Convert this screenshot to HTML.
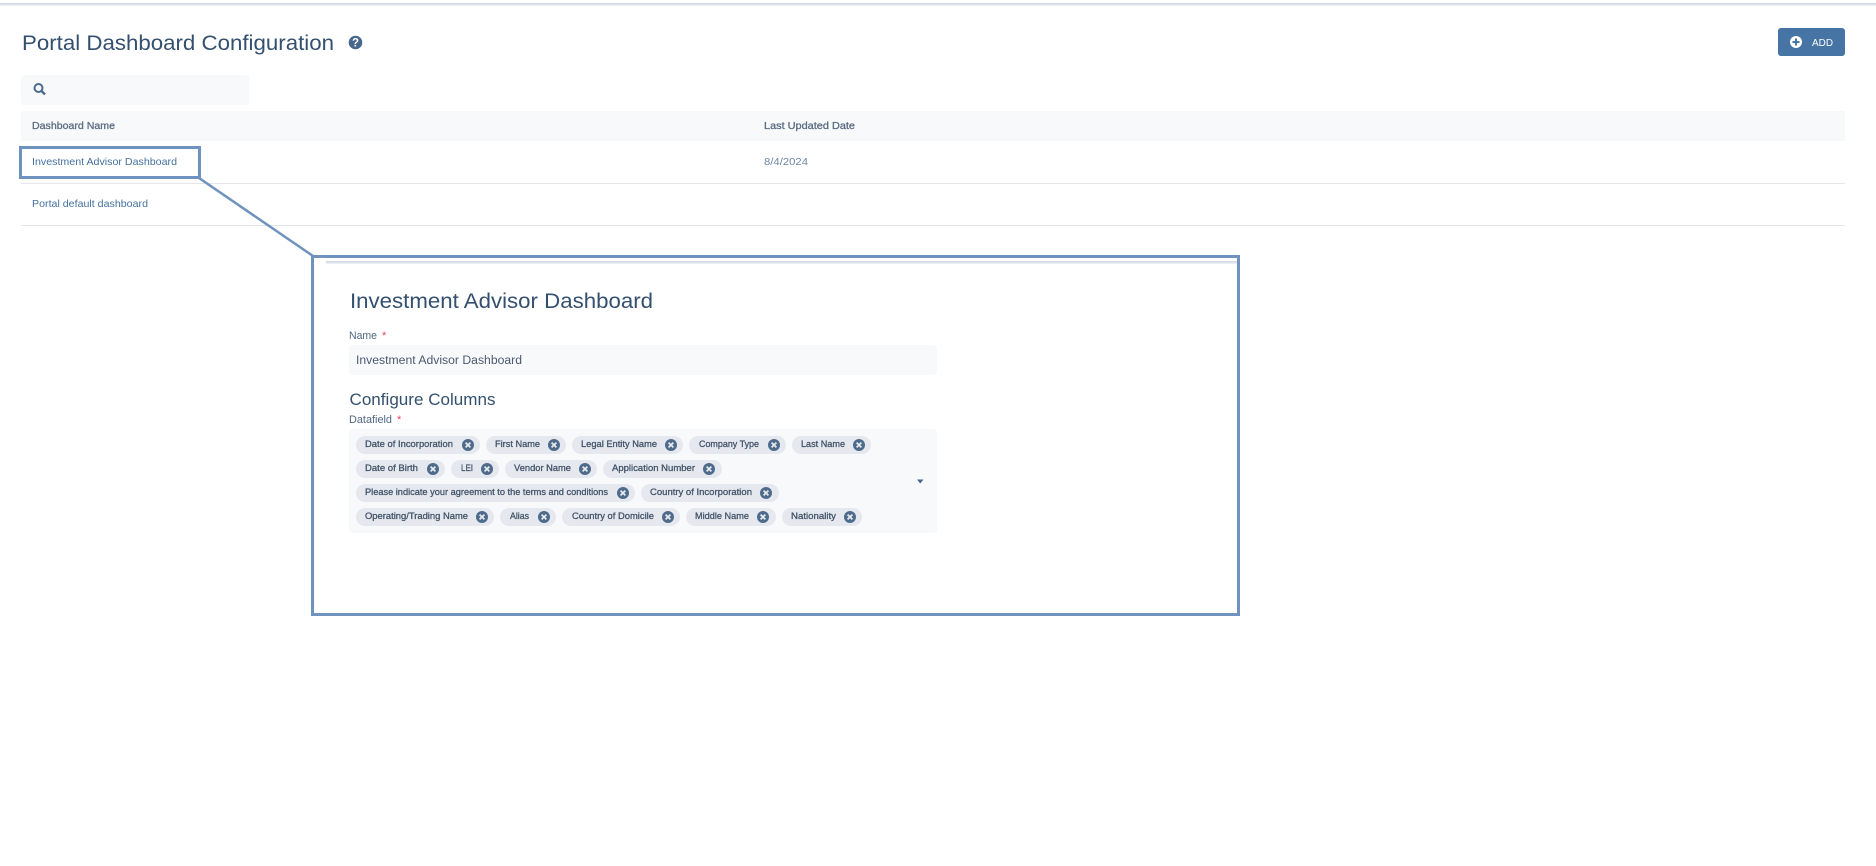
<!DOCTYPE html>
<html lang="en">
<head>
<meta charset="utf-8">
<title>Portal Dashboard Configuration</title>
<style>
html,body{margin:0;padding:0;background:#fff;width:1876px;height:866px;overflow:hidden}
svg{display:block}
text{font-family:"Liberation Sans",sans-serif}
.h{fill:#34506f}
.lab{font-size:11px;fill:#4f6784}
.th{font-size:10.5px;fill:#5a6b80;stroke:#5a6b80;stroke-width:.3px}
.lnk{font-size:10.5px;fill:#44709f}
.ct{font-size:9.5px;fill:#44546a;stroke:#44546a;stroke-width:.3px}
.chip{fill:#e5e8ee}
.box{fill:#f8f9fb}
</style>
</head>
<body>
<svg width="1876" height="866" viewBox="0 0 1876 866" xmlns="http://www.w3.org/2000/svg">
<defs>
<linearGradient id="bar" x1="0" y1="0" x2="0" y2="1"><stop offset="0" stop-color="#c9d4e0"/><stop offset="1" stop-color="#f1f4f8"/></linearGradient>
<g id="x"><circle r="6" fill="#4f6b8c"/><path d="M-2.400-2.400 2.400 2.400M2.400-2.400-2.400 2.400" stroke="#e8ebf0" stroke-width="1.700" fill="none"/></g>
</defs>
<rect width="1876" height="866" fill="#fff"/>
<rect x="0" y="3" width="1876" height="3" fill="url(#bar)"/>

<text class="h" x="22" y="50" font-size="21" textLength="312" lengthAdjust="spacingAndGlyphs">Portal Dashboard Configuration</text>
<circle cx="355.500" cy="42.500" r="6.800" fill="#47678c"/>
<text x="355.500" y="46.700" font-size="11.500" font-weight="700" fill="#fff" text-anchor="middle">?</text>

<rect x="1778" y="28" width="67" height="28" rx="3" fill="#4674a5"/>
<circle cx="1796" cy="42" r="6" fill="#fff"/>
<path d="M1792.500 42h7M1796 38.500v7" stroke="#4674a5" stroke-width="2" fill="none"/>
<text x="1812" y="46" font-size="10.500" fill="#fff" textLength="21" lengthAdjust="spacingAndGlyphs">ADD</text>

<rect class="box" x="21" y="75" width="228" height="30" rx="3"/>
<circle cx="38.500" cy="88" r="4" fill="none" stroke="#4d6b8e" stroke-width="2"/>
<path d="M41.500 91l3.500 3.500" stroke="#4d6b8e" stroke-width="2.400" fill="none"/>

<rect class="box" x="21" y="111" width="1824" height="30"/>
<text class="th" x="32" y="129" textLength="83" lengthAdjust="spacingAndGlyphs">Dashboard Name</text>
<text class="th" x="764" y="129" textLength="91" lengthAdjust="spacingAndGlyphs">Last Updated Date</text>
<text class="lnk" x="32" y="165" textLength="145" lengthAdjust="spacingAndGlyphs">Investment Advisor Dashboard</text>
<text x="764" y="165" font-size="10.500" fill="#6d86a6" textLength="44" lengthAdjust="spacingAndGlyphs">8/4/2024</text>
<rect x="21" y="183" width="1824" height="1" fill="#e3e6ea"/>
<text class="lnk" x="32" y="207" textLength="116" lengthAdjust="spacingAndGlyphs">Portal default dashboard</text>
<rect x="21" y="225" width="1824" height="1" fill="#e3e6ea"/>

<rect x="20.500" y="147.500" width="179" height="30" fill="none" stroke="#6f92bf" stroke-width="3"/>
<path d="M199 178 313 256" stroke="#6f92bf" stroke-width="2.500" fill="none"/>
<rect x="326" y="261" width="911" height="3" fill="url(#bar)"/>
<rect x="312.500" y="256.500" width="926" height="358" fill="none" stroke="#6f92bf" stroke-width="3"/>

<text class="h" x="350" y="308" font-size="21" textLength="303" lengthAdjust="spacingAndGlyphs">Investment Advisor Dashboard</text>

<text class="lab" x="349" y="339" textLength="28" lengthAdjust="spacingAndGlyphs">Name</text>
<text x="382" y="339" font-size="11" fill="#e8445a">*</text>
<rect class="box" x="349" y="345" width="588" height="30" rx="3"/>
<text x="356" y="364" font-size="11.500" fill="#4a5a70" textLength="166" lengthAdjust="spacingAndGlyphs">Investment Advisor Dashboard</text>

<text class="h" x="349.500" y="405" font-size="17" textLength="146" lengthAdjust="spacingAndGlyphs">Configure Columns</text>
<text class="lab" x="349" y="423" textLength="43" lengthAdjust="spacingAndGlyphs">Datafield</text>
<text x="397" y="423" font-size="11" fill="#e8445a">*</text>

<rect class="box" x="349" y="429" width="588" height="104" rx="3"/>

<!-- row 1 -->
<rect class="chip" x="356" y="436" width="124" height="18" rx="9"/><text class="ct" x="365" y="447" textLength="88" lengthAdjust="spacingAndGlyphs">Date of Incorporation</text><use href="#x" x="468" y="445"/>
<rect class="chip" x="486" y="436" width="80" height="18" rx="9"/><text class="ct" x="495" y="447" textLength="45" lengthAdjust="spacingAndGlyphs">First Name</text><use href="#x" x="554" y="445"/>
<rect class="chip" x="572" y="436" width="111" height="18" rx="9"/><text class="ct" x="581" y="447" textLength="76" lengthAdjust="spacingAndGlyphs">Legal Entity Name</text><use href="#x" x="671" y="445"/>
<rect class="chip" x="689" y="436" width="97" height="18" rx="9"/><text class="ct" x="699" y="447" textLength="60" lengthAdjust="spacingAndGlyphs">Company Type</text><use href="#x" x="774" y="445"/>
<rect class="chip" x="792" y="436" width="79" height="18" rx="9"/><text class="ct" x="801" y="447" textLength="44" lengthAdjust="spacingAndGlyphs">Last Name</text><use href="#x" x="859" y="445"/>

<!-- row 2 -->
<rect class="chip" x="356" y="460" width="89" height="18" rx="9"/><text class="ct" x="365" y="471" textLength="53" lengthAdjust="spacingAndGlyphs">Date of Birth</text><use href="#x" x="433" y="469"/>
<rect class="chip" x="451" y="460" width="48" height="18" rx="9"/><text class="ct" x="461" y="471" textLength="12" lengthAdjust="spacingAndGlyphs">LEI</text><use href="#x" x="487" y="469"/>
<rect class="chip" x="505" y="460" width="92" height="18" rx="9"/><text class="ct" x="514" y="471" textLength="57" lengthAdjust="spacingAndGlyphs">Vendor Name</text><use href="#x" x="585" y="469"/>
<rect class="chip" x="603" y="460" width="119" height="18" rx="9"/><text class="ct" x="612" y="471" textLength="83" lengthAdjust="spacingAndGlyphs">Application Number</text><use href="#x" x="709" y="469"/>

<!-- row 3 -->
<rect class="chip" x="356" y="484" width="279" height="18" rx="9"/><text class="ct" x="365" y="495" textLength="243" lengthAdjust="spacingAndGlyphs">Please indicate your agreement to the terms and conditions</text><use href="#x" x="623" y="493"/>
<rect class="chip" x="641" y="484" width="138" height="18" rx="9"/><text class="ct" x="650" y="495" textLength="102" lengthAdjust="spacingAndGlyphs">Country of Incorporation</text><use href="#x" x="766" y="493"/>

<!-- row 4 -->
<rect class="chip" x="356" y="508" width="138" height="18" rx="9"/><text class="ct" x="365" y="519" textLength="103" lengthAdjust="spacingAndGlyphs">Operating/Trading Name</text><use href="#x" x="482" y="517"/>
<rect class="chip" x="500" y="508" width="56" height="18" rx="9"/><text class="ct" x="510" y="519" textLength="19" lengthAdjust="spacingAndGlyphs">Alias</text><use href="#x" x="544" y="517"/>
<rect class="chip" x="562" y="508" width="118" height="18" rx="9"/><text class="ct" x="572" y="519" textLength="82" lengthAdjust="spacingAndGlyphs">Country of Domicile</text><use href="#x" x="668" y="517"/>
<rect class="chip" x="686" y="508" width="90" height="18" rx="9"/><text class="ct" x="695" y="519" textLength="54" lengthAdjust="spacingAndGlyphs">Middle Name</text><use href="#x" x="763" y="517"/>
<rect class="chip" x="782" y="508" width="80" height="18" rx="9"/><text class="ct" x="791" y="519" textLength="45" lengthAdjust="spacingAndGlyphs">Nationality</text><use href="#x" x="850" y="517"/>

<path d="M917 479.500h6.500L920.200 483.500z" fill="#47678c"/>
</svg>
</body>
</html>
